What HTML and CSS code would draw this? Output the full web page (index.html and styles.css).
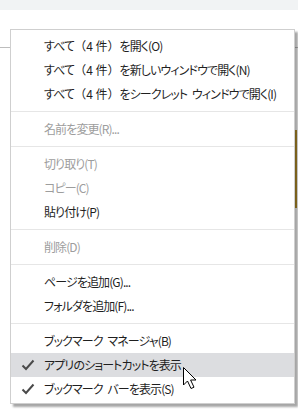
FILE: index.html
```html
<!DOCTYPE html>
<html lang="ja">
<head>
    <meta charset="UTF-8">
    <meta name="viewport" content="width=device-width, initial-scale=1.0">
    <title>ブックマーク メニュー</title>
    <link rel="stylesheet" href="styles.css">
</head>
<body>

    <div class="topbar"></div>
    <div class="page">
        <div class="rule"></div>
        <div class="side-tab"></div>
    </div>

    <div class="menu">
        <div class="item">すべて<span class="count">（4 件）</span>を開く(O)</div>
        <div class="item">すべて<span class="count">（4 件）</span>を新しいウィンドウで開く(N)</div>
        <div class="item">すべて<span class="count">（4 件）</span>をシークレット ウィンドウで開く(I)</div>
        <div class="sep"></div>
        <div class="item disabled">名前を変更(R)...</div>
        <div class="sep"></div>
        <div class="item disabled">切り取り(T)</div>
        <div class="item disabled">コピー(C)</div>
        <div class="item">貼り付け(P)</div>
        <div class="sep"></div>
        <div class="item disabled">削除(D)</div>
        <div class="sep"></div>
        <div class="item">ページを追加(G)...</div>
        <div class="item">フォルダを追加(F)...</div>
        <div class="sep"></div>
        <div class="item">ブックマーク マネージャ(B)</div>
        <div class="item hover">
            <svg class="check" width="14" height="12" viewBox="0 0 14 12"><path d="M1.5 6.5 L5 10 L12.5 1.5" fill="none" stroke="#4a4a4a" stroke-width="2"/></svg>
            アプリのショートカットを表示
        </div>
        <div class="item">
            <svg class="check" width="14" height="12" viewBox="0 0 14 12"><path d="M1.5 6.5 L5 10 L12.5 1.5" fill="none" stroke="#4a4a4a" stroke-width="2"/></svg>
            ブックマーク バーを表示(S)
        </div>
    </div>

    <!-- mouse pointer -->
    <svg class="cursor" width="16" height="24" viewBox="0 0 16 24">
        <path d="M0.5 0.5 L0.5 18 L4.5 14 L8 21.5 L11 20.2 L7.6 13 L13 13 Z" fill="#fff" stroke="#000" stroke-width="1"/>
    </svg>

</body>
</html>
```

FILE: styles.css
```css
body {
    margin: 0;
    background: #fff;
    font-family: "Noto Sans CJK JP", "Noto Sans", sans-serif;
    overflow: hidden;
}
.topbar {
    height: 10px;
    background: #f1f3f4;
}
.page {
    height: 370px;
    padding-top: 37px;
    position: relative;
}
.rule {
    height: 1px;
    background: #bdbdbd;
}
.side-tab {
    position: absolute;
    right: 1px;
    top: 120px;
    width: 3px;
    height: 78px;
    background: #b8922a;
}
.menu {
    position: absolute;
    left: 10px;
    top: 29px;
    width: 283px;
    padding: 4px 0 2px 0;
    background: #fff;
    border: 1px solid #cfcfcf;
    box-shadow: 3px 3px 2px rgba(0, 0, 0, 0.35);
}
.item {
    position: relative;
    height: 24px;
    line-height: 24px;
    padding-left: 33px;
    font-size: 12px;
    color: #1f1f1f;
    font-feature-settings: "palt";
    letter-spacing: -0.9px;
    word-spacing: 3px;
    white-space: nowrap;
}
.count {
    font-feature-settings: normal;
    letter-spacing: 0;
    word-spacing: 0;
}
.item.disabled {
    color: #9d9d9d;
}
.item.hover {
    background: #dcdde0;
}
.check {
    position: absolute;
    left: 10px;
    top: 6px;
}
.sep {
    height: 1px;
    background: #e6e6e6;
    margin: 5px 0;
}
.cursor {
    position: absolute;
    left: 183px;
    top: 367px;
}
```
